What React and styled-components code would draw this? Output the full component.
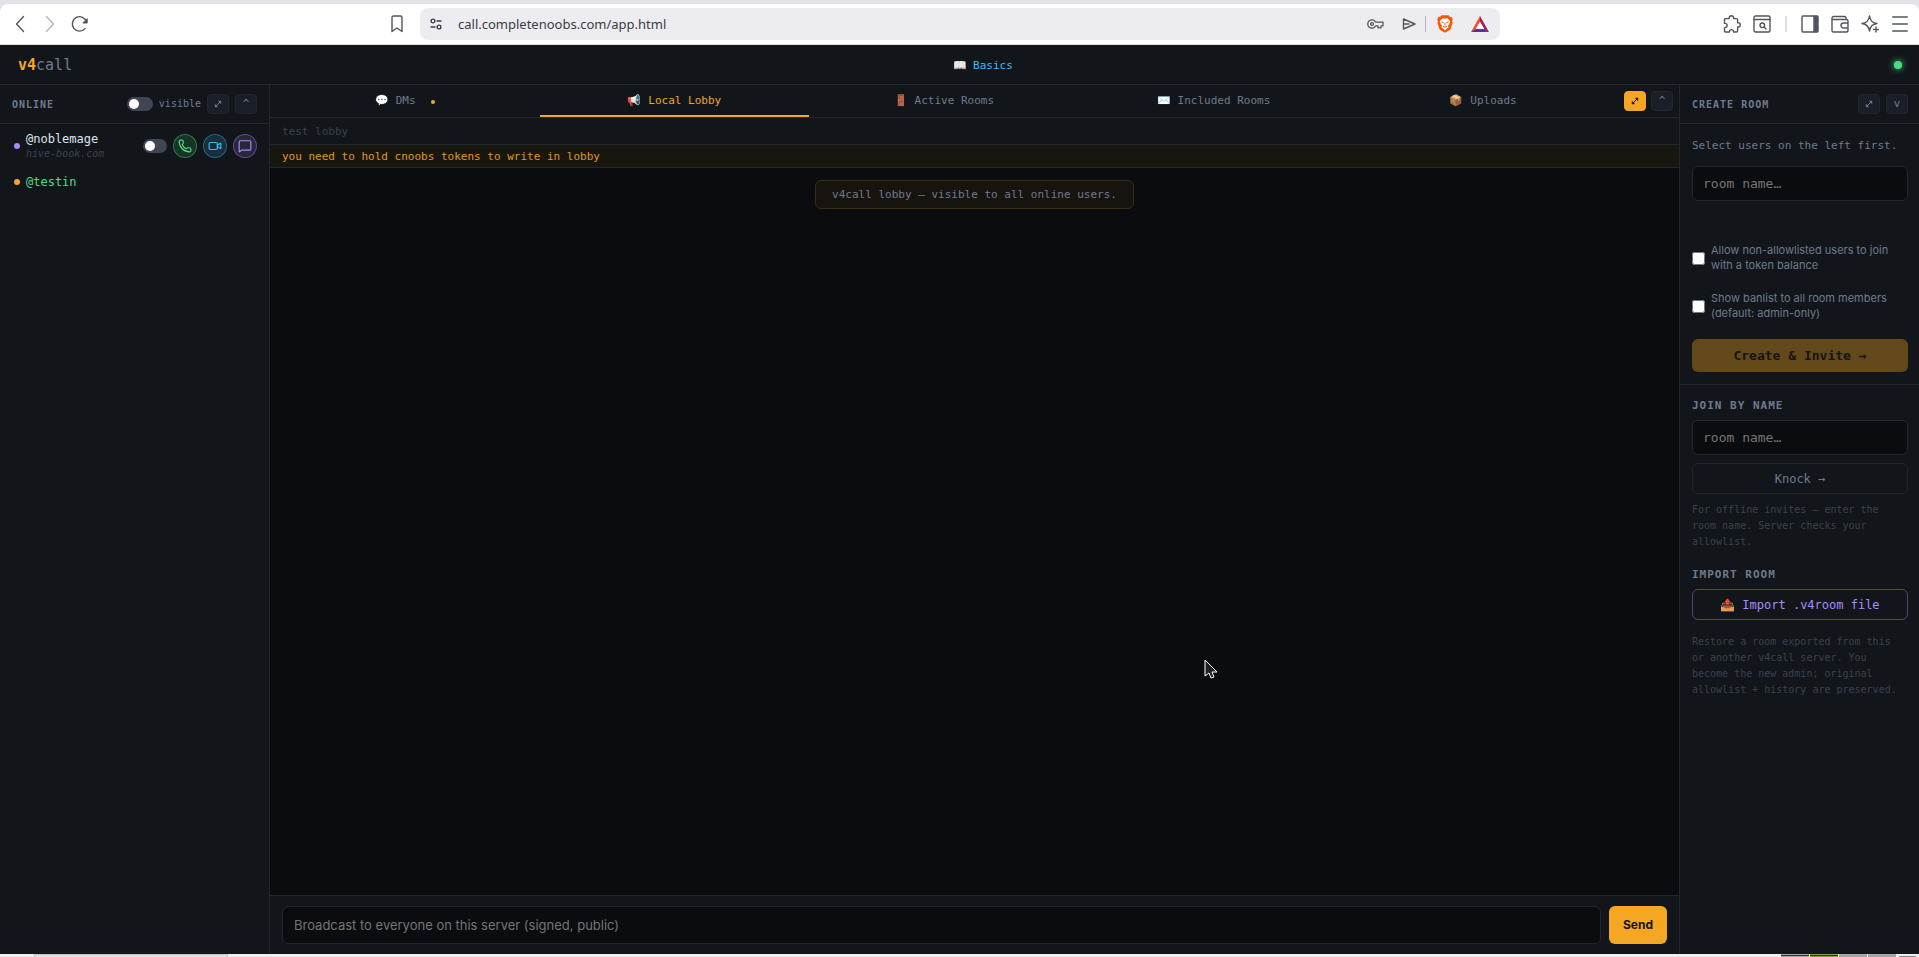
import React from 'react';
import styled, { createGlobalStyle, css } from 'styled-components';
import { MessageSquare, Phone, Video } from 'lucide-react';

const mono = '"DejaVu Sans Mono", "Noto Color Emoji", monospace';
const sans = 'Inter, "Liberation Sans", sans-serif';

const c = {
  bg: '#0a0c0f',
  panel: '#12161a',
  line: '#22262e',
  soft: '#1a1e27',
  dim: '#3a414e',
  muted: '#6f7a8e',
  amber: '#f5a623',
  blue: '#38bdf8',
  green: '#4ade80',
  violet: '#a78bfa',
};

const Global = createGlobalStyle`
  *, *::before, *::after { box-sizing: border-box; }
  html, body { margin: 0; background: ${c.bg}; }
  button, input { font: inherit; margin: 0; }
  h1, h2, p, ul { margin: 0; padding: 0; font: inherit; }
`;

const Page = styled.div`
  min-height: 100vh;
  display: flex;
  flex-direction: column;
  background: ${c.panel};
  color: ${c.muted};
  font-family: ${mono};
  font-size: 11px;
  line-height: 16px;
`;

/* Browser toolbar */
const Chrome = styled.div`
  padding-top: 4px;
  background: #e3e3e7;
  border-bottom: 1px solid #dcdce0;
`;
const ChromeBar = styled.div`
  height: 40px;
  display: grid;
  grid-template-columns: 399px minmax(0, 1fr) 409px;
  align-items: center;
  background: #fff;
  border-radius: 8px 8px 0 0;
  padding: 0 10px 0 9px;
`;
const ChromeGroup = styled.div`
  display: flex;
  align-items: center;
  gap: 12px;
`;
const IconButton = styled.button`
  display: flex;
  padding: 0;
  border: 0;
  background: none;
  color: ${(p) => p.$tone || '#54565c'};
  svg { display: block; }
`;
const NavGroup = styled(ChromeGroup)`
  padding-left: 2px;
  > :last-child { margin-left: auto; margin-right: 5px; }
`;
const ToolGroup = styled(ChromeGroup)`
  justify-content: flex-end;
`;
const AddressBar = styled.div`
  height: 32px;
  margin-left: 12px;
  display: flex;
  align-items: center;
  gap: 16px;
  padding: 0 11px 0 10px;
  border-radius: 8px;
  background: #ededf1;
`;
const Address = styled.input`
  flex: 1;
  min-width: 0;
  padding: 0;
  border: 0;
  background: none;
  outline: 0;
  color: #3b3c42;
  font-family: "Noto Sans", sans-serif;
  font-size: 13px;
`;
const AddressTools = styled(ChromeGroup)`
  gap: 18px;
`;
const Pair = styled.div`
  display: flex;
  align-items: center;
  gap: ${(p) => p.$gap}px;
`;
const Rule = styled.span`
  width: ${(p) => p.$w}px;
  height: 16px;
  margin: 0 ${(p) => p.$w}px;
  background: ${(p) => p.$tone};
`;

/* App header */
const TopBar = styled.header`
  height: 40px;
  display: flex;
  justify-content: space-between;
  align-items: center;
  padding: 0 17px 0 18px;
  border-bottom: 1px solid ${c.line};
`;
const Brand = styled.h1`
  font-size: 15px;
  b { color: ${c.amber}; }
`;
const HelpLink = styled.a`
  display: flex;
  align-items: center;
  gap: 6px;
  padding-top: 2px;
  color: ${c.blue};
  text-decoration: none;
`;
const StatusLight = styled.span`
  width: 8px;
  height: 8px;
  border-radius: 50%;
  background: ${c.green};
  box-shadow: 0 0 6px ${c.green};
`;

const Columns = styled.div`
  flex: 1;
  display: grid;
  grid-template-columns: 270px minmax(0, 1fr) 240px;
`;
const Side = styled.aside`
  border: 0 solid ${c.line};
  border-width: ${(p) => (p.$right ? '0 0 0 1px' : '0 1px 0 0')};
`;
const SideHead = styled.div`
  height: 39px;
  display: flex;
  align-items: center;
  gap: 6px;
  padding: 0 ${(p) => (p.$right ? 11 : 12)}px 0 12px;
  border-bottom: 1px solid ${c.line};
`;
const SideTitle = styled.h2`
  margin-right: auto;
  padding-top: 2px;
  font-size: 10px;
  font-weight: 700;
  letter-spacing: 1px;
`;
const SquareButton = styled.button`
  width: 22px;
  height: 20px;
  flex: none;
  display: flex;
  align-items: center;
  justify-content: center;
  padding: 0;
  border: 1px solid ${(p) => (p.$on ? c.amber : c.line)};
  border-radius: 4px;
  background: ${(p) => (p.$on ? c.amber : c.soft)};
  color: ${(p) => (p.$on ? '#12161a' : c.muted)};
`;
const SwitchLabel = styled.label`
  display: flex;
  align-items: center;
  gap: 6px;
  font-size: 10px;
`;
const Switch = styled.input`
  appearance: none;
  flex: none;
  width: ${(p) => (p.$small ? 24 : 26)}px;
  height: 14px;
  padding: 2px;
  border-radius: 7px;
  background: #404553;
  &::before {
    content: '';
    display: block;
    width: 10px;
    height: 10px;
    border-radius: 50%;
    background: #fff;
  }
`;

const UserList = styled.ul`
  list-style: none;
  padding: 4px 0;
`;
const UserRow = styled.li`
  display: flex;
  align-items: center;
  gap: 6px;
  min-height: 36px;
  padding: 0 12px 0 14px;
`;
const Presence = styled.span`
  width: 6px;
  height: 6px;
  flex: none;
  border-radius: 50%;
  background: ${(p) => p.$tone};
`;
const UserName = styled.div`
  margin-right: auto;
  color: ${(p) => p.$tone};
  font-size: 12px;
`;
const UserHost = styled.div`
  color: ${c.dim};
  font-size: 10px;
  line-height: 14px;
  font-style: italic;
`;
const RoundButton = styled.button`
  width: 24px;
  height: 24px;
  flex: none;
  display: flex;
  align-items: center;
  justify-content: center;
  padding: 0;
  border: 1px solid ${(p) => p.$tone}66;
  border-radius: 50%;
  background: ${(p) => p.$tone}26;
  color: ${(p) => p.$tone};
`;

/* Centre column */
const Main = styled.main`
  display: flex;
  flex-direction: column;
  background: ${c.bg};
`;
const TabBar = styled.nav`
  height: 33px;
  display: flex;
  align-items: center;
  gap: 5px;
  padding-right: 6px;
  background: ${c.panel};
  border-bottom: 1px solid ${c.line};
`;
const Tabs = styled.div`
  flex: 1;
  align-self: stretch;
  display: grid;
  grid-template-columns: repeat(5, 1fr);
  margin-right: 1px;
`;
const Tab = styled.button`
  display: flex;
  align-items: center;
  justify-content: center;
  gap: 7px;
  padding: 2px 0 0;
  border: 0;
  border-bottom: 2px solid ${(p) => (p.$on ? c.amber : 'transparent')};
  background: none;
  color: ${(p) => (p.$on ? c.amber : c.muted)};
`;
const Unread = styled.span`
  width: 4px;
  height: 4px;
  margin: 2px 0 0 8px;
  border-radius: 50%;
  background: ${c.amber};
`;
const Notice = styled.p`
  padding: ${(p) => (p.$warn ? '4px 12px 2px' : '6px 12px 4px')};
  border-bottom: 1px solid ${c.line};
  background: ${(p) => (p.$warn ? '#17160f' : c.panel)};
  color: ${(p) => (p.$warn ? '#e09820' : c.dim)};
`;
const Feed = styled.div`
  flex: 1;
  padding: 12px;
  text-align: center;
`;
const SystemMessage = styled.p`
  display: inline-block;
  padding: 6px 16px 5px;
  border: 1px solid #3b2c14;
  border-radius: 6px;
  background: #17140f;
`;
const Composer = styled.form`
  display: flex;
  gap: 8px;
  padding: 10px 12px;
  border-top: 1px solid ${c.line};
  background: ${c.panel};
`;
const field = css`
  min-width: 0;
  border: 1px solid ${c.line};
  border-radius: 6px;
  background: ${c.bg};
  color: #dde3ec;
  outline: 0;
  &::placeholder { color: #757575; opacity: 1; }
`;
const MessageField = styled.input`
  ${field}
  flex: 1;
  height: 38px;
  padding: 0 11px;
  font-family: ${sans};
  font-size: 13px;
`;
const SendButton = styled.button`
  width: 58px;
  padding: 0;
  border: 0;
  border-radius: 6px;
  background: ${c.amber};
  color: #12161a;
  font-family: ${sans};
  font-size: 12px;
  font-weight: 700;
`;

/* Right column */
const Section = styled.section`
  display: flex;
  flex-direction: column;
  padding: 12px 11px ${(p) => (p.$line ? 12 : 4)}px 12px;
  border-bottom: ${(p) => (p.$line ? `1px solid ${c.line}` : 0)};
`;
const SectionTitle = styled.h2`
  padding: 1px 0 6px;
  font-weight: 700;
  letter-spacing: 1px;
`;
const RoomField = styled.input`
  ${field}
  width: 100%;
  height: 35px;
  padding: 0 10px;
  font-size: 13px;
`;
const Lead = styled.p`
  padding: 2px 0 12px;
`;
const Options = styled.div`
  margin-top: 42px;
`;
const Option = styled.label`
  display: flex;
  align-items: center;
  gap: 6px;
  margin-bottom: 18px;
  font-family: ${sans};
  line-height: 15px;
`;
const Check = styled.input`
  width: 13px;
  height: 13px;
  flex: none;
`;
const PrimaryButton = styled.button`
  height: 33px;
  border: 0;
  border-radius: 6px;
  background: #634819;
  color: #12161a;
  font-size: 13px;
  font-weight: 700;
`;
const OutlineButton = styled.button`
  height: 31px;
  display: flex;
  align-items: center;
  justify-content: center;
  gap: 7px;
  border: 1px solid ${(p) => (p.$violet ? '#4e4379' : c.line)};
  border-radius: 6px;
  background: none;
  color: ${(p) => (p.$violet ? c.violet : c.muted)};
  font-size: 12px;
  ${RoomField} + & { margin-top: 8px; }
`;
const Hint = styled.p`
  margin-top: ${(p) => p.$gap}px;
  color: ${c.dim};
  font-size: 10px;
`;

/* Desktop panel edge */
const Dock = styled.div`
  height: 3px;
  display: flex;
  justify-content: space-between;
  padding: 0 3px 0 34px;
  background: #eee;
`;
const DockTask = styled.span`
  width: 194px;
  border: 1px solid #c4c4c4;
  border-bottom: 0;
  background: #e0e0e0;
`;
const Pager = styled.span`
  display: flex;
  gap: 1px;
`;
const PagerCell = styled.span`
  width: 28px;
  border-top: 1px solid ${(p) => p.$tone};
  background: ${(p) => p.$tone};
  box-shadow: ${(p) => (p.$edge ? `inset 0 1px ${p.$edge}` : 'none')};
`;
const DockHandle = styled.span`
  width: 17px;
  margin: 2px 0 0 2px;
  background: #888;
`;

const Pointer = styled.svg`
  position: absolute;
  left: 1204px;
  top: 659px;
`;

const Ico = ({ w = 18, h = 18, children, sw = 1.4 }) => (
  <svg width={w} height={h} viewBox={`0 0 ${w} ${h}`} fill="none" stroke="currentColor" strokeWidth={sw} strokeLinecap="round" strokeLinejoin="round" aria-hidden="true">
    {children}
  </svg>
);

const ExpandIcon = () => (
  <Ico w={8} h={8} sw={1}>
    <path d="M1.500 6.500 6.500 1.500" />
    <path d="M4.500 1H7v2.500zM1 4.500V7h2.500z" fill="currentColor" strokeWidth=".4" />
  </Ico>
);

function PanelButtons({ active, glyph = '^' }) {
  return (
    <>
      <SquareButton $on={active} aria-label="Expand"><ExpandIcon /></SquareButton>
      <SquareButton aria-label="Collapse">{glyph}</SquareButton>
    </>
  );
}

const tabs = [
  ['💬', 'DMs', true],
  ['📢', 'Local Lobby'],
  ['🚪', 'Active Rooms'],
  ['✉️', 'Included Rooms'],
  ['📦', 'Uploads'],
];

const BraveIcon = () => (
  <svg width="16" height="18" viewBox="0 0 16 18" aria-hidden="true">
    <path fill="#ff5500" d="M4.500.3h7L13 2l1.600-.2 1.200 2.600-.7 1.600.5 2-2.400 6.800L8 17.800l-5.200-3L.4 8l.5-2L.2 4.400l1.200-2.600L3 2z" />
    <path fill="#fff" d="M8 3.800 5.500 3.200 2.800 6.200l1 3.200 1.400.9-.8 1.900L8 15.200l3.600-3-.8-1.900 1.400-.9 1-3.200-2.700-3z" />
    <path fill="none" stroke="#ff5500" strokeWidth="1" d="m4.600 6.900 2.200.9M11.400 6.900l-2.200.9M8 8v2.400M6 11.300l2 .9 2-.9" />
  </svg>
);

const TriangleIcon = () => (
  <svg width="18" height="17" viewBox="0 0 18 17" aria-hidden="true">
    <path fill="#fff" d="M9 4 4 14h10z" />
    <path fill="#ff4724" d="M9 0 0 16l4.500-2.700L9 5.500z" />
    <path fill="#9e1f63" d="m9 0 9 16-4.500-2.700L9 5.500z" />
    <path fill="#662d91" d="M0 16h18l-4.500-3h-9z" />
  </svg>
);

function BrowserBar() {
  return (
    <Chrome>
      <ChromeBar>
        <NavGroup>
          <IconButton aria-label="Back"><Ico><path d="M12.500 1.500 5.500 9l7 7.500" /></Ico></IconButton>
          <IconButton aria-label="Forward" $tone="#b5b5ba"><Ico><path d="m5.500 1.500 7 7.500-7 7.500" /></Ico></IconButton>
          <IconButton aria-label="Reload">
            <Ico>
              <path d="M15.500 7A7.200 7.200 0 1 0 14 13.600" />
              <path d="M16.200 4v4h-4z" fill="currentColor" strokeWidth="1" />
            </Ico>
          </IconButton>
          <IconButton aria-label="Bookmark"><Ico w={12}><path d="M1 2.500Q1 1 2.500 1h7Q11 1 11 2.500V16.500l-5-3.500-5 3.500z" /></Ico></IconButton>
        </NavGroup>
        <AddressBar>
          <IconButton aria-label="Site information" $tone="#3b3c42">
            <Ico w={12} h={12}><circle cx="3" cy="3" r="1.900" /><path d="M7 3h4M1 9h4" /><circle cx="9" cy="9" r="1.900" /></Ico>
          </IconButton>
          <Address aria-label="Address" defaultValue="call.completenoobs.com/app.html" />
          <AddressTools>
            <IconButton aria-label="Passwords">
              <Ico w={17} h={12} sw={1.3}>
                <path d="M8.700 4.200A4.200 4.200 0 1 0 8.700 7.800H11v2h3v-2h2V4.200z" />
                <circle cx="5" cy="6" r="1.400" />
              </Ico>
            </IconButton>
            <Pair $gap={8}>
              <IconButton aria-label="Share"><Ico w={14} h={12}><path d="M1.500 1 13 6 1.500 11zM1.500 6H7" /></Ico></IconButton>
              <Pair $gap={10}>
                <Rule $w={1} $tone="#b4b4ba" />
                <IconButton aria-label="Shields"><BraveIcon /></IconButton>
              </Pair>
            </Pair>
            <IconButton aria-label="Rewards"><TriangleIcon /></IconButton>
          </AddressTools>
        </AddressBar>
        <ToolGroup>
          <IconButton aria-label="Extensions">
            <Ico><path d="M1.500 4.600Q1.500 3.600 2.500 3.600H6.200V3a2.200 2.200 0 0 1 4.400 0v.6h3q1 0 1 1v3.200h.6a2.100 2.100 0 0 1 0 4.200h-.6v4q0 1-1 1H10.500v-.4a2 2 0 0 0-4 0v.4h-4q-1 0-1-1V12.600h.5a2 2 0 0 0 0-4.200h-.5z" /></Ico>
          </IconButton>
          <IconButton aria-label="Search page">
            <Ico><rect x="1" y="1" width="16" height="16" rx="1.500" /><path d="M1 4.500h16M11 12l2 2" /><circle cx="9.300" cy="10.300" r="2.300" /></Ico>
          </IconButton>
          <Rule $w={2} $tone="#dedee3" />
          <IconButton aria-label="Side panel">
            <Ico><rect x="1" y="1" width="16" height="16" rx="1" /><path d="M13 1.500h3.500v15H13z" fill="currentColor" /></Ico>
          </IconButton>
          <IconButton aria-label="Wallet">
            <Ico><path d="M15 4.500V3Q15 1.500 13.500 1.500H2.500Q1 1.500 1 3v12.500Q1 17 2.500 17h13q1.500 0 1.500-1.500V6q0-1.500-1.500-1.500H1M17 8h-4.500a2.500 2.500 0 0 0 0 5H17" /></Ico>
          </IconButton>
          <IconButton aria-label="Assistant">
            <Ico><path d="M8.500 1q.9 6.600 7.500 7.500-3 .4-5 2-2 2-2.500 5.500Q7.600 9.400 1 8.500 7.600 7.600 8.500 1z" /><path d="M15 12v5M12.500 14.500h5" /></Ico>
          </IconButton>
          <IconButton aria-label="Menu" $tone="#7c7f85"><Ico sw={2}><path d="M2 2h14M2 9h14M2 16h14" /></Ico></IconButton>
        </ToolGroup>
      </ChromeBar>
    </Chrome>
  );
}

export default function App() {
  return (
    <Page>
      <Global />
      <BrowserBar />
      <TopBar>
        <Brand><b>v4</b>call</Brand>
        <HelpLink href="#basics"><span>📖</span>Basics</HelpLink>
        <StatusLight />
      </TopBar>
      <Columns>
        <Side>
          <SideHead>
            <SideTitle>ONLINE</SideTitle>
            <SwitchLabel><Switch type="checkbox" />visible</SwitchLabel>
            <PanelButtons />
          </SideHead>
          <UserList>
            <UserRow>
              <Presence $tone={c.violet} />
              <UserName $tone="#dde3ec">@noblemage<UserHost>hive-book.com</UserHost></UserName>
              <Switch $small type="checkbox" aria-label="Select @noblemage" />
              <RoundButton $tone={c.green} aria-label="Voice call"><Phone size={14} /></RoundButton>
              <RoundButton $tone={c.blue} aria-label="Video call"><Video size={14} /></RoundButton>
              <RoundButton $tone={c.violet} aria-label="Message"><MessageSquare size={14} /></RoundButton>
            </UserRow>
            <UserRow>
              <Presence $tone={c.amber} />
              <UserName $tone={c.green}>@testin</UserName>
            </UserRow>
          </UserList>
        </Side>
        <Main>
          <TabBar>
            <Tabs>
              {tabs.map(([icon, name, unread]) => (
                <Tab key={name} $on={name === 'Local Lobby'}>
                  <span>{icon}</span>{name}{unread && <Unread />}
                </Tab>
              ))}
            </Tabs>
            <PanelButtons active />
          </TabBar>
          <Notice>test lobby</Notice>
          <Notice $warn>you need to hold cnoobs tokens to write in lobby</Notice>
          <Feed><SystemMessage>v4call lobby — visible to all online users.</SystemMessage></Feed>
          <Composer>
            <MessageField aria-label="Message" placeholder="Broadcast to everyone on this server (signed, public)" />
            <SendButton type="button">Send</SendButton>
          </Composer>
        </Main>
        <Side $right>
          <SideHead $right>
            <SideTitle>CREATE ROOM</SideTitle>
            <PanelButtons glyph="v" />
          </SideHead>
          <Section $line>
            <Lead>Select users on the left first.</Lead>
            <RoomField aria-label="New room name" placeholder="room name…" />
            <Options>
              <Option><Check type="checkbox" />Allow non-allowlisted users to join with a token balance</Option>
              <Option><Check type="checkbox" />Show banlist to all room members (default: admin-only)</Option>
            </Options>
            <PrimaryButton>Create &amp; Invite →</PrimaryButton>
          </Section>
          <Section>
            <SectionTitle>JOIN BY NAME</SectionTitle>
            <RoomField aria-label="Room to join" placeholder="room name…" />
            <OutlineButton>Knock →</OutlineButton>
            <Hint $gap={8}>For offline invites — enter the room name. Server checks your allowlist.</Hint>
          </Section>
          <Section>
            <SectionTitle>IMPORT ROOM</SectionTitle>
            <OutlineButton $violet><span>📤</span>Import .v4room file</OutlineButton>
            <Hint $gap={14}>Restore a room exported from this or another v4call server. You become the new admin; original allowlist + history are preserved.</Hint>
          </Section>
        </Side>
      </Columns>
      <Dock>
        <DockTask />
        <Pager>
          <PagerCell $tone="#a5a5a5" $edge="#333" />
          <PagerCell $tone="#7fa050" $edge="#333" />
          <PagerCell $tone="#a5a5a5" />
          <PagerCell $tone="#a5a5a5" />
          <DockHandle />
        </Pager>
      </Dock>
      <Pointer width="14" height="20" viewBox="0 0 14 20"><path d="M1 1v16l4-3 2 5 3-1-2-5h5z" fill="#222" stroke="#fff" /></Pointer>
    </Page>
  );
}
